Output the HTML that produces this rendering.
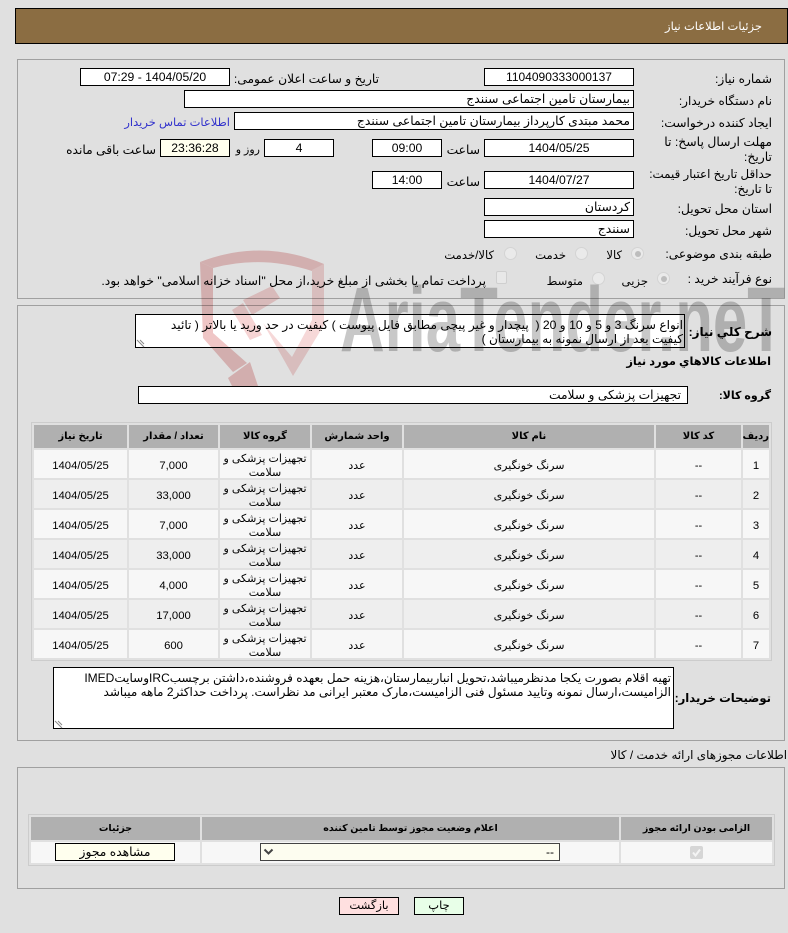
<!DOCTYPE html>
<html lang="fa" dir="rtl"><head><meta charset="utf-8"><title>جزئیات اطلاعات نیاز</title>
<style>
html,body{margin:0;padding:0;background:#e0e0e0}
body{position:relative;width:788px;height:933px;overflow:hidden;font-family:"Liberation Sans","DejaVu Sans",sans-serif;font-size:12.25px;color:#000}
.a{position:absolute;box-sizing:border-box}
.p{position:absolute;box-sizing:border-box;border:1px solid #a0a0a0}
.t{position:absolute;white-space:nowrap;direction:rtl;line-height:14px}
.b{font-weight:bold;font-size:11.4px}
.i{position:absolute;box-sizing:border-box;height:18px;border:1px solid #000;background:#fff;line-height:16px;text-align:center;white-space:nowrap;overflow:hidden;font-size:12.2px}
.r{text-align:right;padding-right:3px;font-size:12.35px}
.ra{position:absolute;width:13px;height:13px;border-radius:50%;background:#eaeaea;border:1px solid #d4d4d4;box-sizing:border-box}
.ra.on:after{content:"";position:absolute;left:2.5px;top:2.5px;width:6px;height:6px;border-radius:50%;background:#bdbdbd}
table{position:absolute;border-collapse:separate;border-spacing:2px;border:1px solid #ccc;table-layout:fixed;direction:rtl;margin:0}
th{background:#b0b0b0;font-weight:bold;font-size:10px;padding:0;height:23px;text-align:center}
td{padding:0;height:28px;text-align:center;line-height:14px;font-size:11px}
td div{position:relative;top:2px}
td.n{font-size:11.3px}
tr.o td{background:#f7f7f7}
tr.e td{background:#eee}
.btn{position:absolute;box-sizing:border-box;height:18px;border:1px solid #000;text-align:center;line-height:16px;font-size:11.5px}
</style></head><body>

<div class="a" style="left:15px;top:8px;width:773px;height:36px;background:#8b6d42;border:1px solid #000"></div>
<div class="t" style="right:26px;top:20px;color:#fff;font-size:11.5px">جزئیات اطلاعات نیاز</div>

<div class="p" style="left:17px;top:59px;width:768px;height:240px"></div>
<div class="p" style="left:17px;top:305px;width:768px;height:436px"></div>
<div class="p" style="left:17px;top:767px;width:768px;height:122px"></div>

<div class="t" style="right:16px;top:72px">شماره نیاز:</div>
<div class="i" style="left:484px;top:68px;width:150px;font-size:12px">1104090333000137</div>
<div class="t" style="right:409px;top:72px">تاریخ و ساعت اعلان عمومی:</div>
<div class="i" style="left:80px;top:68px;width:150px">1404/05/20 - 07:29</div>

<div class="t" style="right:16px;top:94px;font-size:12.05px">نام دستگاه خریدار:</div>
<div class="i r" style="left:184px;top:90px;width:450px">بیمارستان تامین اجتماعی سنندج</div>

<div class="t" style="right:16px;top:116px">ایجاد کننده درخواست:</div>
<div class="i r" style="left:234px;top:112px;width:400px">محمد مبتدی کارپرداز بیمارستان تامین اجتماعی سنندج</div>
<div class="t" style="right:558px;top:116px;color:#3333cc;font-size:11.5px">اطلاعات تماس خریدار</div>

<div class="t" style="right:16px;top:135px;line-height:15px;text-align:right;font-size:12.4px">مهلت ارسال پاسخ: تا<br>تاریخ:</div>
<div class="i" style="left:484px;top:139px;width:150px">1404/05/25</div>
<div class="t" style="right:308px;top:143px">ساعت</div>
<div class="i" style="left:372px;top:139px;width:70px">09:00</div>
<div class="i" style="left:264px;top:139px;width:70px">4</div>
<div class="t" style="right:528px;top:143px;font-size:11px">روز و</div>
<div class="i" style="left:160px;top:139px;width:70px;background:#ffffee">23:36:28</div>
<div class="t" style="right:632px;top:143px">ساعت باقی مانده</div>

<div class="t" style="right:16px;top:167px;line-height:15px;text-align:right;font-size:11.85px">حداقل تاریخ اعتبار قیمت:<br><span style="font-size:12.1px">تا تاریخ:</span></div>
<div class="i" style="left:484px;top:171px;width:150px">1404/07/27</div>
<div class="t" style="right:308px;top:175px">ساعت</div>
<div class="i" style="left:372px;top:171px;width:70px">14:00</div>

<div class="t" style="right:16px;top:202px">استان محل تحویل:</div>
<div class="i r" style="left:484px;top:198px;width:150px">کردستان</div>
<div class="t" style="right:16px;top:224px">شهر محل تحویل:</div>
<div class="i r" style="left:484px;top:220px;width:150px">سنندج</div>

<div class="t" style="right:16px;top:247px">طبقه بندی موضوعی:</div>
<div class="ra on" style="left:631px;top:247px"></div>
<div class="t" style="right:166px;top:249px;font-size:11.6px">کالا</div>
<div class="ra" style="left:575px;top:247px"></div>
<div class="t" style="right:222px;top:249px;font-size:11.6px">خدمت</div>
<div class="ra" style="left:504px;top:247px"></div>
<div class="t" style="right:294px;top:249px;font-size:11.6px">کالا/خدمت</div>

<div class="t" style="right:16px;top:272px">نوع فرآیند خرید :</div>
<div class="ra on" style="left:657px;top:272px"></div>
<div class="t" style="right:140px;top:275px;font-size:11.6px">جزیی</div>
<div class="ra" style="left:592px;top:272px"></div>
<div class="t" style="right:205px;top:275px;font-size:11.6px">متوسط</div>
<div class="a" style="left:496px;top:271px;width:11px;height:13px;background:#e8e8e8;border:1px solid #cfcfcf;border-radius:2px"></div>
<div class="t" style="right:302px;top:274px;font-size:12.35px">پرداخت تمام یا بخشی از مبلغ خرید،از محل "اسناد خزانه اسلامی" خواهد بود.</div>

<div class="t b" style="right:16px;top:325px;font-size:12px">شرح کلي نیاز:</div>
<div class="a" style="left:135px;top:314px;width:550px;height:34px;background:#fff;border:1px solid #000"></div>
<div class="t" style="right:105px;top:318px;font-size:12.17px">انواع سرنگ 3 و 5 و 10 و 20 (&nbsp; پیچدار و غیر پیچی مطابق فایل پیوست ) کیفیت در حد ورید یا بالاتر ( تائید</div>
<div class="t" style="right:105px;top:332px;font-size:12.1px">کیفیت بعد از ارسال نمونه به بیمارستان )</div>
<svg class="a" style="left:136px;top:339px" width="9" height="9"><path d="M1 1L8 8M4 1L8 5" stroke="#888" stroke-width="1" fill="none"/></svg>

<div class="t b" style="right:17px;top:355px">اطلاعات کالاهاي مورد نياز</div>
<div class="t b" style="right:17px;top:389px;font-size:11px">گروه کالا:</div>
<div class="i r" style="left:138px;top:386px;width:550px;padding-right:6px;font-size:12.25px">تجهیزات پزشکی و سلامت</div>

<table style="left:31px;top:422px;width:741px">
<colgroup><col style="width:26px"><col style="width:85px"><col style="width:250px"><col style="width:90px"><col style="width:90px"><col style="width:89px"><col style="width:93px"></colgroup>
<tr><th>ردیف</th><th>کد کالا</th><th>نام کالا</th><th>واحد شمارش</th><th>گروه کالا</th><th>تعداد / مقدار</th><th>تاریخ نیاز</th></tr>
<tr class="o"><td class="n"><div>1</div></td><td><div>--</div></td><td><div>سرنگ خونگیری</div></td><td><div>عدد</div></td><td><div>تجهیزات پزشکی و<br>سلامت</div></td><td class="n"><div>7,000</div></td><td class="n"><div>1404/05/25</div></td></tr>
<tr class="e"><td class="n"><div>2</div></td><td><div>--</div></td><td><div>سرنگ خونگیری</div></td><td><div>عدد</div></td><td><div>تجهیزات پزشکی و<br>سلامت</div></td><td class="n"><div>33,000</div></td><td class="n"><div>1404/05/25</div></td></tr>
<tr class="o"><td class="n"><div>3</div></td><td><div>--</div></td><td><div>سرنگ خونگیری</div></td><td><div>عدد</div></td><td><div>تجهیزات پزشکی و<br>سلامت</div></td><td class="n"><div>7,000</div></td><td class="n"><div>1404/05/25</div></td></tr>
<tr class="e"><td class="n"><div>4</div></td><td><div>--</div></td><td><div>سرنگ خونگیری</div></td><td><div>عدد</div></td><td><div>تجهیزات پزشکی و<br>سلامت</div></td><td class="n"><div>33,000</div></td><td class="n"><div>1404/05/25</div></td></tr>
<tr class="o"><td class="n"><div>5</div></td><td><div>--</div></td><td><div>سرنگ خونگیری</div></td><td><div>عدد</div></td><td><div>تجهیزات پزشکی و<br>سلامت</div></td><td class="n"><div>4,000</div></td><td class="n"><div>1404/05/25</div></td></tr>
<tr class="e"><td class="n"><div>6</div></td><td><div>--</div></td><td><div>سرنگ خونگیری</div></td><td><div>عدد</div></td><td><div>تجهیزات پزشکی و<br>سلامت</div></td><td class="n"><div>17,000</div></td><td class="n"><div>1404/05/25</div></td></tr>
<tr class="o"><td class="n"><div>7</div></td><td><div>--</div></td><td><div>سرنگ خونگیری</div></td><td><div>عدد</div></td><td><div>تجهیزات پزشکی و<br>سلامت</div></td><td class="n"><div>600</div></td><td class="n"><div>1404/05/25</div></td></tr>
</table>

<div class="t b" style="right:17px;top:692px;font-size:11.6px">توضیحات خریدار:</div>
<div class="a" style="left:53px;top:667px;width:621px;height:62px;background:#fff;border:1px solid #000"></div>
<div class="t" style="right:117px;top:671px;font-size:12.02px">تهیه اقلام بصورت یکجا مدنظرمیباشد،تحویل انباربیمارستان،هزینه حمل بعهده فروشنده،داشتن برچسبIRCوسایتIMED</div>
<div class="t" style="right:117px;top:685px;font-size:12.02px">الزامیست،ارسال نمونه وتایید مسئول فنی الزامیست،مارک معتبر ایرانی مد نظراست. پرداخت حداکثر2 ماهه میباشد</div>
<svg class="a" style="left:54px;top:720px" width="9" height="9"><path d="M1 1L8 8M4 1L8 5" stroke="#888" stroke-width="1" fill="none"/></svg>

<div class="t" style="right:1px;top:748px;font-size:11.9px">اطلاعات مجوزهای ارائه خدمت / کالا</div>

<table style="left:28px;top:814px;width:747px">
<colgroup><col style="width:151px"><col style="width:417px"><col style="width:169px"></colgroup>
<tr><th style="font-size:9.5px">الزامی بودن ارائه مجوز</th><th style="font-size:9.5px">اعلام وضعیت مجوز توسط تامین کننده</th><th style="font-size:9.5px">جزئیات</th></tr>
<tr class="o"><td style="height:21px"></td><td style="height:21px"></td><td style="height:21px"></td></tr>
</table>
<div class="a" style="left:690px;top:846px;width:13px;height:13px;background:#d6d6d6;border-radius:2px"></div>
<svg class="a" style="left:690px;top:846px" width="13" height="13"><path d="M3 6.5L5.5 9.5L10 3.5" stroke="#f4f4f4" stroke-width="2" fill="none"/></svg>
<div class="a" style="left:260px;top:843px;width:300px;height:18px;background:#fdfdf0;border:1px solid #444"></div>
<div class="t" style="left:546px;top:845px;direction:ltr;font-size:12px">--</div>
<svg class="a" style="left:263px;top:848px" width="11" height="8"><path d="M1.5 1.5L5.5 5.5L9.5 1.5" stroke="#444" stroke-width="2" fill="none"/></svg>
<div class="btn" style="left:55px;top:843px;width:120px;background:#ffffee;font-size:12.3px">مشاهده مجوز</div>

<div class="btn" style="left:339px;top:897px;width:60px;background:#ffe0e0">بازگشت</div>
<div class="btn" style="left:414px;top:897px;width:50px;background:#e8ffe8">چاپ</div>

<svg class="a" style="left:0;top:0;mix-blend-mode:multiply;pointer-events:none" width="788" height="933">
<defs><clipPath id="c"><rect x="190" y="245" width="598" height="141"/></clipPath></defs>
<g clip-path="url(#c)">
<path d="M200 262Q262 238 324 264L312 271Q262 255 213 268Z" fill="#f0c8c8"/>
<path d="M200 262L213 268L213 333L247 363L233 372L203 338Z" fill="#efc6c6"/>
<path d="M228 378L250 362L258 386L232 386Z" fill="#efc6c6"/>
<path d="M263 323L292 357L312 320L312 270L324 264L324 325L293 376Z" fill="#f6d8d8"/>
<path d="M232 310L243 303L262 335L250 340Z" fill="#f6d4d4"/>
<path d="M243 300L272 286L280 298L252 315Z" fill="#f6d4d4"/>
<text x="340" y="351" font-family="Liberation Sans,sans-serif" font-weight="bold" font-size="92" fill="#c8c8c8" textLength="445" lengthAdjust="spacingAndGlyphs" direction="ltr">AriaTender.neT</text>
</g>
</svg>
</body></html>
